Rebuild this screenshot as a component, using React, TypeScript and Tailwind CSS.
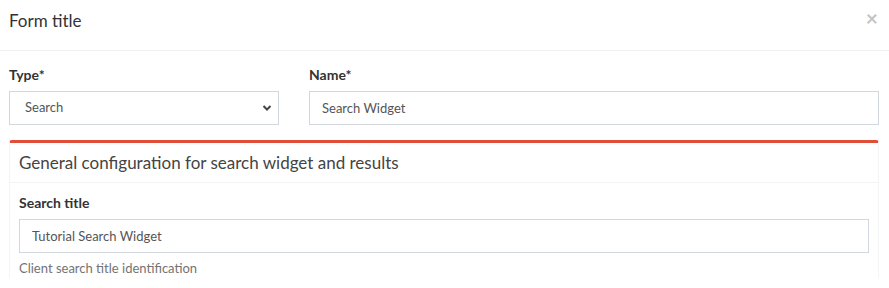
import React from 'react';

const font = { fontFamily: '"Lato", "Liberation Sans", sans-serif' };

const Label: React.FC<{ children: React.ReactNode }> = ({ children }) => (
  <label className="block text-[14px] font-bold leading-[20px] text-[#333] mb-[6px]">{children}</label>
);

export default function App() {
  return (
    <div className="w-[889px] h-[288px] bg-white overflow-hidden text-[#333]" style={font}>
      <div className="flex items-center justify-between h-[51px] pl-[9px] pr-[11px] pb-[8px] border-b border-[#f0f0f0]">
        <h4 className="text-[17px] leading-[24px] text-[#333]">Form title</h4>
        <button className="text-[21px] font-bold leading-none text-[#c4c4c4] -mt-[8px]">×</button>
      </div>

      <div className="pl-[9px] pr-[10px] pt-[14px]">
        <div className="grid grid-cols-[270px_1fr] gap-[30px]">
          <div>
            <Label>Type*</Label>
            <div className="relative">
              <select
                className="appearance-none w-full h-[34px] border border-[#d2d6de] bg-white px-[15px] text-[13px] text-[#555] outline-none"
                defaultValue="search"
                style={font}
              >
                <option value="search">Search</option>
              </select>
              <svg className="absolute right-[7px] top-[13px] w-[10px] h-[8px]" viewBox="0 0 10 8">
                <path d="M1.5 2 L5 5.5 L8.5 2" fill="none" stroke="#444" strokeWidth="2" />
              </svg>
            </div>
          </div>
          <div>
            <Label>Name*</Label>
            <input
              className="w-full h-[34px] border border-[#d2d6de] bg-white px-[12px] text-[13px] text-[#555] outline-none"
              defaultValue="Search Widget"
              style={font}
            />
          </div>
        </div>

        <div className="mt-[15px] border-t-[3px] border-t-[#e04e39] rounded-t-[3px] border-x border-x-[#f4f4f4] bg-white">
          <div className="h-[40px] flex items-center px-[9px] border-b border-[#f4f4f4]">
            <h3 className="text-[17px] leading-[22px] text-[#444]">General configuration for search widget and results</h3>
          </div>
          <div className="px-[9px] pt-[10px]">
            <Label>Search title</Label>
            <input
              className="w-full h-[34px] border border-[#d2d6de] bg-white px-[12px] text-[13px] text-[#555] outline-none"
              defaultValue="Tutorial Search Widget"
              style={font}
            />
            <p className="mt-[5px] text-[13px] leading-[20px] text-[#737373]">Client search title identification</p>
          </div>
        </div>
      </div>
    </div>
  );
}
